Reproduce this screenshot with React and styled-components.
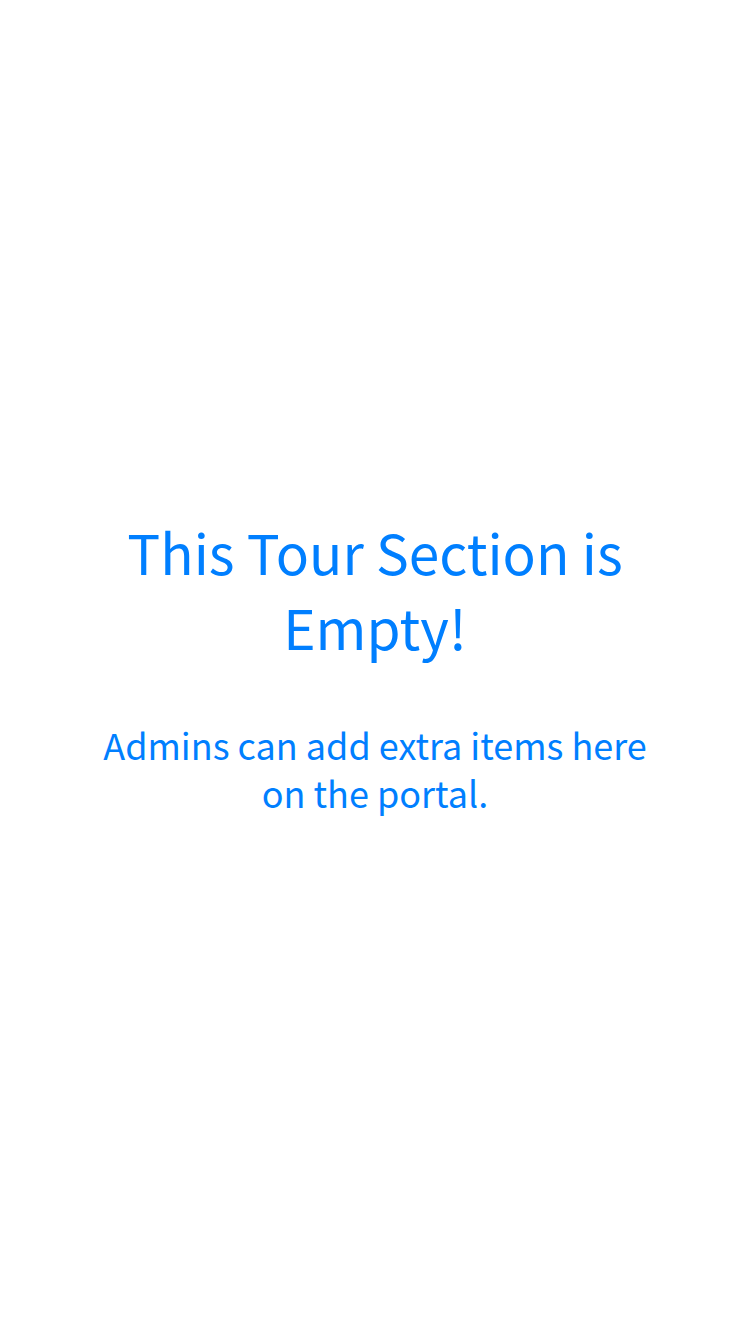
import React from "react";
import styled, { createGlobalStyle } from "styled-components";

const GlobalStyle = createGlobalStyle`
  body {
    margin: 0;
    background: #ffffff;
  }
`;

const Screen = styled.main`
  display: flex;
  flex-direction: column;
  align-items: center;
  justify-content: center;
  box-sizing: border-box;
  min-height: 100vh;
  padding: 0 96px 4px;
  color: #007fff;
  font-family: "Noto Sans CJK SC", "Noto Sans", sans-serif;
  text-align: center;
`;

const Title = styled.h1`
  margin: 0 0 56px;
  font-size: 55px;
  font-weight: 400;
  line-height: 75px;
`;

const Message = styled.p`
  margin: 0;
  font-size: 36px;
  line-height: 48px;
`;

export default function App() {
  return (
    <>
      <GlobalStyle />
      <Screen>
        <Title>This Tour Section is Empty!</Title>
        <Message>Admins can add extra items here on the portal.</Message>
      </Screen>
    </>
  );
}
